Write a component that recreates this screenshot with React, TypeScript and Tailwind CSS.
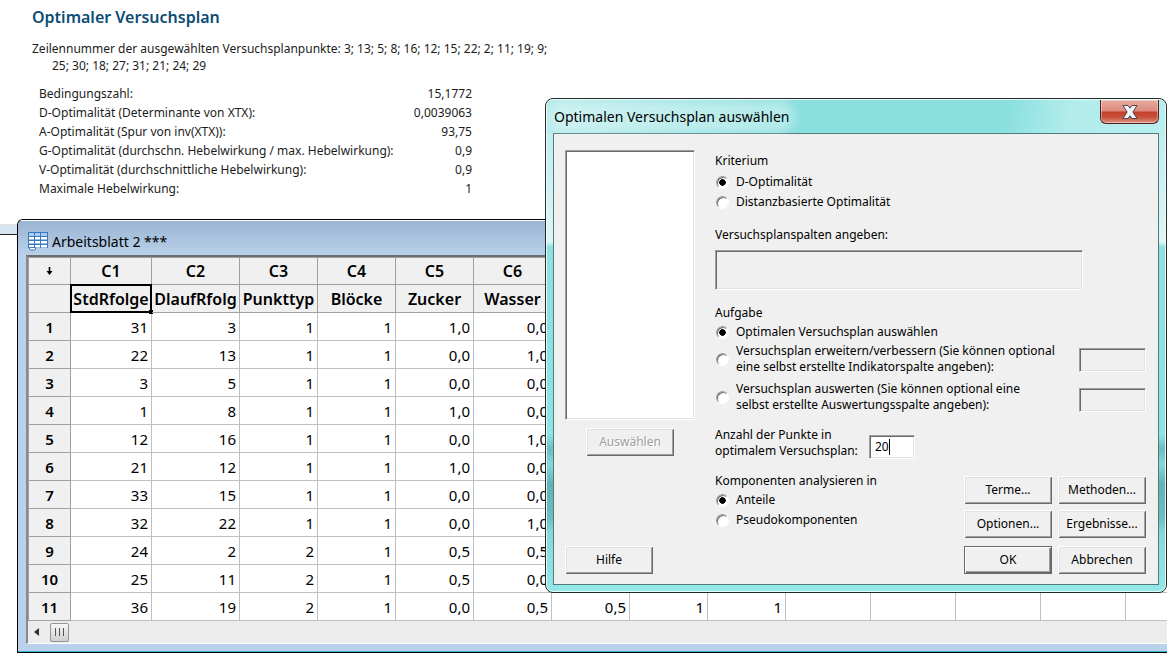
import { useState } from "react"
import type { ReactNode } from "react"

const reportRows = [
  ["Bedingungszahl:", "15,1772"],
  ["D-Optimalität (Determinante von XTX):", "0,0039063"],
  ["A-Optimalität (Spur von inv(XTX)):", "93,75"],
  ["G-Optimalität (durchschn. Hebelwirkung / max. Hebelwirkung):", "0,9"],
  ["V-Optimalität (durchschnittliche Hebelwirkung):", "0,9"],
  ["Maximale Hebelwirkung:", "1"],
]

const columns = [
  { id: "C1", name: "StdRfolge", width: 81 },
  { id: "C2", name: "DlaufRfolg", width: 88 },
  { id: "C3", name: "Punkttyp", width: 78 },
  { id: "C4", name: "Blöcke", width: 78 },
  { id: "C5", name: "Zucker", width: 78 },
  { id: "C6", name: "Wasser", width: 78 },
  { id: "", name: "", width: 78 },
  { id: "", name: "", width: 78 },
  { id: "", name: "", width: 78 },
  { id: "", name: "", width: 85 },
  { id: "", name: "", width: 85 },
  { id: "", name: "", width: 85 },
  { id: "", name: "", width: 85 },
  { id: "", name: "", width: 85 },
]

const rows = [
  ["31", "3", "1", "1", "1,0", "0,0"],
  ["22", "13", "1", "1", "0,0", "1,0"],
  ["3", "5", "1", "1", "0,0", "0,0"],
  ["1", "8", "1", "1", "1,0", "0,0"],
  ["12", "16", "1", "1", "0,0", "1,0"],
  ["21", "12", "1", "1", "1,0", "0,0"],
  ["33", "15", "1", "1", "0,0", "0,0"],
  ["32", "22", "1", "1", "0,0", "1,0"],
  ["24", "2", "2", "1", "0,5", "0,5"],
  ["25", "11", "2", "1", "0,5", "0,0"],
  ["36", "19", "2", "1", "0,0", "0,5", "0,5", "1", "1"],
]

const sunken =
  "border border-t-[#a0a0a0] border-l-[#a0a0a0] border-r-white border-b-white outline-none shadow-[inset_1px_1px_#696969,inset_-1px_-1px_#e3e3e3]"

function Report() {
  return (
    <section className="h-[219px] pt-[5px] pl-8 font-['Noto_Sans',sans-serif] text-[12px] text-[#1c1c1c]">
      <h1 className="text-[16px] leading-6 font-semibold text-[#0b4d75]">Optimaler Versuchsplan</h1>
      <p className="mt-[11px] w-[528px] pl-5 -indent-5 leading-[17px]">
        Zeilennummer der ausgewählten Versuchsplanpunkte: 3; 13; 5; 8; 16; 12; 15; 22; 2; 11; 19; 9;
        25; 30; 18; 27; 31; 21; 24; 29
      </p>
      <table className="mt-2.5 ml-[7px] w-[433px]">
        <tbody>
          {reportRows.map(([label, value]) => (
            <tr key={label} className="h-[19px] leading-[19px]">
              <th scope="row" className="p-0 text-left font-normal whitespace-nowrap">{label}</th>
              <td className="p-0 text-right">{value}</td>
            </tr>
          ))}
        </tbody>
      </table>
    </section>
  )
}

function SheetIcon() {
  return (
    <svg viewBox="0 0 20 19" className="h-[19px] w-5" aria-hidden="true">
      <rect width="20" height="16" fill="#3a78c3" />
      <g fill="#a9cdf3">
        <rect x="1" y="1" width="5" height="3" />
        <rect x="7" y="1" width="5" height="3" />
        <rect x="13" y="1" width="6" height="3" />
      </g>
      <g fill="#fff">
        {[5, 9, 13].map((y) => (
          <g key={y}>
            <rect x="1" y={y} width="5" height="2.500" />
            <rect x="7" y={y} width="5" height="2.500" />
            <rect x="13" y={y} width="6" height="2.500" />
          </g>
        ))}
      </g>
      <path d="M1.500 15.500h6v1.500l-1 1h-4l-1-1z" fill="#fff" stroke="#3a78c3" />
    </svg>
  )
}

function Worksheet() {
  return (
    <section className="min-w-0 flex-1 overflow-hidden rounded-tl-md border-t border-b border-l border-black bg-[#b9d1ea] font-['Noto_Sans',sans-serif] text-black">
      <div className="flex h-[35px] items-center gap-1 border-t border-white bg-linear-to-b from-[#9ab4d2] to-[#b9d1ea] pt-1.5 pl-2.5">
        <SheetIcon />
        <h2 className="text-[14px]">Arbeitsblatt 2 ***</h2>
      </div>
      <div className="ml-2 overflow-hidden border-t-2 border-b border-l-2 border-t-[#6e6e6e] border-b-white border-l-[#8a8a8a]">
        <table className="w-[1183px] table-fixed border-separate border-spacing-0 border-t border-l border-[#a0a0a0] bg-white text-[15px] leading-5">
          <colgroup>
            <col style={{ width: 42 }} />
            {columns.map((c, i) => (
              <col key={i} style={{ width: c.width }} />
            ))}
          </colgroup>
          <thead className="bg-[#f0f0f0] text-[16px]">
            <tr className="h-[27px]">
              <th className="border-r border-b border-[#a0a0a0] p-0">
                <svg viewBox="0 0 7 8" className="mx-auto h-2 w-[7px]" aria-hidden="true">
                  <path d="M2.700 0h1.600v4H6.500L3.500 8 .5 4h2.200z" />
                </svg>
              </th>
              {columns.map((c, i) => (
                <th key={i} className="border-r border-b border-[#a0a0a0] p-0 font-semibold">{c.id}</th>
              ))}
            </tr>
            <tr className="h-7">
              <th className="border-r border-b border-[#a0a0a0] p-0" />
              {columns.map((c, i) => (
                <th key={i} className="relative border-r border-b border-[#a0a0a0] p-0 font-semibold">
                  {c.name}
                  {i === 0 && <span className="absolute -inset-px border-2 border-black" />}
                  {i === 0 && <span className="absolute -right-[2px] -bottom-[2px] size-1 bg-black" />}
                </th>
              ))}
            </tr>
          </thead>
          <tbody>
            {rows.map((row, r) => (
              <tr key={r} className="h-7">
                <th scope="row" className="border-r border-b border-[#a0a0a0] bg-[#f0f0f0] p-0 font-semibold">
                  {r + 1}
                </th>
                {columns.map((_, i) => (
                  <td key={i} className="border-r border-b border-[#c0c0c0] py-0 pr-[3px] pl-0 text-right">{row[i]}</td>
                ))}
              </tr>
            ))}
          </tbody>
        </table>
        <div className="flex h-[22px] items-center gap-2.5 bg-[#ececec] pl-1.5">
          <button aria-label="Nach links" className="h-4 w-1.5">
            <svg viewBox="0 0 6 8" className="h-2 w-1.5">
              <path d="M5 0v8L0 4z" fill="#333" />
            </svg>
          </button>
          <div className="flex h-[19px] w-[19px] items-center justify-center gap-[3px] rounded-xs border border-[#959595] bg-linear-to-b from-[#f6f6f6] to-[#d0d0d0]">
            <span className="h-2 w-px bg-[#555]" />
            <span className="h-2 w-px bg-[#555]" />
            <span className="h-2 w-px bg-[#555]" />
          </div>
        </div>
      </div>
      <div className="h-2 border-b border-[#35b4cd]" />
    </section>
  )
}

function RadioOption({
  name,
  checked,
  onChange,
  children,
}: {
  name: string
  checked: boolean
  onChange: () => void
  children: ReactNode
}) {
  return (
    <label className="flex items-center gap-[7px]">
      <input
        type="radio"
        name={name}
        checked={checked}
        onChange={onChange}
        className="ml-px size-[13px] shrink-0 appearance-none rounded-full border border-t-[#a0a0a0] border-r-white border-b-white border-l-[#a0a0a0] bg-white shadow-[inset_1px_1px_#696969] checked:bg-[radial-gradient(circle,#000_3px,#fff_3.5px)]"
      />
      <span>{children}</span>
    </label>
  )
}

function DialogButton({ children, isDefault, disabled }: { children: ReactNode; isDefault?: boolean; disabled?: boolean }) {
  return (
    <button
      disabled={disabled}
      className={
        isDefault
          ? "h-7 w-[88px] border border-[#696969] bg-[#f0f0f0] shadow-[inset_1px_1px_#fff,inset_-1px_-1px_#696969,inset_-2px_-2px_#a0a0a0]"
          : "h-7 w-[88px] bg-[#f0f0f0] shadow-[inset_1px_1px_#fff,inset_-1px_-1px_#696969,inset_2px_2px_#e3e3e3,inset_-2px_-2px_#a0a0a0] disabled:text-[#a0a0a0] disabled:text-shadow-[1px_1px_#fff]"
      }
    >
      {children}
    </button>
  )
}

function DesignDialog() {
  const [criterion, setCriterion] = useState("d")
  const [task, setTask] = useState("select")
  const [scale, setScale] = useState("anteile")
  const [points, setPoints] = useState("20")

  return (
    <div
      role="dialog"
      aria-labelledby="dialog-title"
      className="absolute top-[98px] right-0 left-[545px] overflow-hidden rounded-lg border border-[#1d2b2b] bg-[linear-gradient(#b5eaea,#dff5f5_29%,#8fe0e0_30%,#8fe3e3_68%,#6cbcc0_71%,#88d8d8_74%,#64b2b6_78%,#6dbcc0_85%,#88d8d8_88%,#95e8e8)] font-['Noto_Sans',sans-serif] text-[12px] leading-4 text-black"
    >
      <div className="rounded-[7px] border border-white/80 pb-1.5">
        <div className="flex h-[33px] items-start justify-between rounded-t-md bg-[linear-gradient(100deg,#b5eaea,#8adfdf_40%,#8adfdf_74%,#b2ecec_84%,#b8eeee)] pr-1.5 pl-[7px]">
          <h2
            id="dialog-title"
            className="mt-[7px] rounded-full bg-white/35 text-[14px] leading-5 shadow-[0_0_10px_6px_#ffffff59]"
          >
            Optimalen Versuchsplan auswählen
          </h2>
          <button
            aria-label="Schließen"
            className="flex h-6 w-[59px] items-center justify-center rounded-b-md border border-t-0 border-[#4c1f1c] bg-[linear-gradient(#e8aca2,#dd8a7c_48%,#c3402a_52%,#c9503a_75%,#dd9683)] shadow-[inset_0_0_0_1px_#ffffff66]"
          >
            <svg viewBox="0 0 16 14" className="h-3.5 w-4">
              <path d="M1 .5h5L8 3.200 10 .5h5L10.800 7l4.200 6.500h-5L8 10.800 6 13.500H1L5.200 7z" fill="#f5f5f5" stroke="#4a4a5c" />
            </svg>
          </button>
        </div>
        <div className="mx-1.5 flex gap-5 border border-[#4e7c7c] bg-[#f0f0f0] pt-4 pr-3 pb-2.5 pl-[11px]">
          <div className="flex w-[130px] shrink-0 flex-col">
            <div role="listbox" aria-label="Spalten" className={`h-[270px] bg-white ${sunken}`} />
            <div className="mt-2 pl-[21px]">
              <DialogButton disabled>Auswählen</DialogButton>
            </div>
            <div className="mt-auto">
              <DialogButton>Hilfe</DialogButton>
            </div>
          </div>

          <div className="min-w-0 flex-1 pt-[3px]">
            <fieldset>
              <legend className="mb-[3px]">Kriterium</legend>
              <div className="grid auto-rows-[20px]">
                <RadioOption name="criterion" checked={criterion === "d"} onChange={() => setCriterion("d")}>
                  D-Optimalität
                </RadioOption>
                <RadioOption name="criterion" checked={criterion === "dist"} onChange={() => setCriterion("dist")}>
                  Distanzbasierte Optimalität
                </RadioOption>
              </div>
            </fieldset>

            <label htmlFor="design-columns" className="mt-[15px] block">
              Versuchsplanspalten angeben:
            </label>
            <textarea id="design-columns" disabled className={`mt-[7px] block h-10 w-[368px] resize-none bg-[#f0f0f0] ${sunken}`} />

            <div className="mt-[15px] flex justify-between">
              <fieldset>
                <legend className="mb-px">Aufgabe</legend>
                <div className="grid grid-rows-[20px_32px_32px] gap-y-px">
                  <RadioOption name="task" checked={task === "select"} onChange={() => setTask("select")}>
                    Optimalen Versuchsplan auswählen
                  </RadioOption>
                  <RadioOption name="task" checked={task === "augment"} onChange={() => setTask("augment")}>
                    Versuchsplan erweitern/verbessern (Sie können optional
                    <br />
                    eine selbst erstellte Indikatorspalte angeben):
                  </RadioOption>
                  <div className="pt-[5px]">
                    <RadioOption name="task" checked={task === "evaluate"} onChange={() => setTask("evaluate")}>
                      Versuchsplan auswerten (Sie können optional eine
                      <br />
                      selbst erstellte Auswertungsspalte angeben):
                    </RadioOption>
                  </div>
                </div>
              </fieldset>
              <div className="flex flex-col gap-4 pt-[43px]">
                <input disabled aria-label="Indikatorspalte" className={`h-6 w-[67px] bg-[#f0f0f0] ${sunken}`} />
                <input disabled aria-label="Auswertungsspalte" className={`h-6 w-[67px] bg-[#f0f0f0] ${sunken}`} />
              </div>
            </div>

            <div className="mt-[15px] flex items-end gap-2.5">
              <label htmlFor="points" className="w-[144px] whitespace-nowrap">
                Anzahl der Punkte in
                <br />
                optimalem Versuchsplan:
              </label>
              <div className={`flex h-6 w-[46px] items-center bg-white pl-[5px] ${sunken}`}>
                <input
                  id="points"
                  value={points}
                  onChange={(e) => setPoints(e.target.value)}
                  className="w-3.5 bg-transparent outline-none"
                />
                <span className="h-4 w-px bg-black" />
              </div>
            </div>

            <div className="mt-3.5 flex justify-between">
              <fieldset>
                <legend className="mb-px">Komponenten analysieren in</legend>
                <div className="grid auto-rows-[20px]">
                  <RadioOption name="scale" checked={scale === "anteile"} onChange={() => setScale("anteile")}>
                    Anteile
                  </RadioOption>
                  <RadioOption name="scale" checked={scale === "pseudo"} onChange={() => setScale("pseudo")}>
                    Pseudokomponenten
                  </RadioOption>
                </div>
              </fieldset>
              <div className="flex flex-col gap-1.5 pt-[3px]">
                <div className="flex gap-1.5">
                  <DialogButton>Terme...</DialogButton>
                  <DialogButton>Methoden...</DialogButton>
                </div>
                <div className="flex gap-1.5">
                  <DialogButton>Optionen...</DialogButton>
                  <DialogButton>Ergebnisse...</DialogButton>
                </div>
                <div className="flex gap-1.5 pt-0.5">
                  <DialogButton isDefault>OK</DialogButton>
                  <DialogButton>Abbrechen</DialogButton>
                </div>
              </div>
            </div>
          </div>
        </div>
      </div>
    </div>
  )
}

export default function App() {
  return (
    <main className="relative min-h-screen overflow-hidden bg-white">
      <Report />
      <div className="flex">
        {/* lower edge of the window behind the worksheet */}
        <div className="w-[17px] shrink-0 pt-[5px]">
          <div className="h-[11px] border-t border-b border-t-[#e4e4e4] border-b-[#222] bg-[#d7e4f2]" />
        </div>
        <Worksheet />
      </div>
      <DesignDialog />
    </main>
  )
}
